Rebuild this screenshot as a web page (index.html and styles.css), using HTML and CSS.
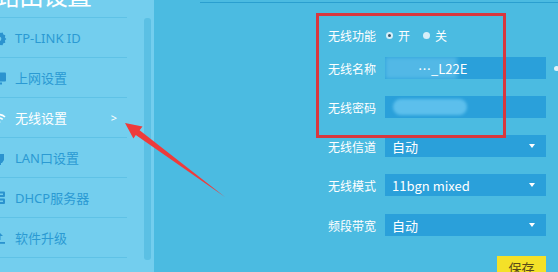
FILE: index.html
```html
<!DOCTYPE html>
<html lang="zh-CN">
<head>
<meta charset="utf-8">
<title>无线设置</title>
<link rel="stylesheet" href="styles.css">
</head>
<body>
<div class="page">
  <aside class="sidebar">
    <nav class="nav">
      <div class="brand">路由设置</div>
      <ul class="menu">
        <li class="item">
          <svg class="ico" viewBox="0 0 16 16"><path d="M8 1.5l1.6 1.4 2.1-.4.6 2 2 .8-.4 2.1L15.3 9l-1.4 1.6.4 2.1-2 .6-.8 2-2.1-.4L8 16.3 6.4 14.9l-2.1.4-.6-2-2-.8.4-2.1L.7 9l1.4-1.6L1.7 5.3l2-.6.8-2 2.1.4z" fill="#2b93cf"/><circle cx="8" cy="8.8" r="2.3" fill="#72cded"/></svg>
          <span class="txt">TP-LINK ID</span>
        </li>
        <li class="item">
          <svg class="ico" viewBox="0 0 16 16"><rect x="1" y="2.5" width="14" height="9" rx="1" fill="#2b93cf"/><rect x="5" y="12.5" width="6" height="2" fill="#2b93cf"/></svg>
          <span class="txt">上网设置</span>
        </li>
        <li class="item active">
          <svg class="ico" viewBox="0 0 16 16"><path d="M2 7a8.5 8.5 0 0 1 12 0M4.3 9.4a5.2 5.2 0 0 1 7.4 0" fill="none" stroke="#ffffff" stroke-width="1.6"/><circle cx="8" cy="12" r="1.3" fill="#ffffff"/></svg>
          <span class="txt">无线设置</span>
          <span class="chev">&gt;</span>
        </li>
        <li class="item">
          <svg class="ico" viewBox="0 0 16 16"><path d="M3 4h10v6l-2 3H5l-2-3z" fill="#2b93cf"/><rect x="6" y="13" width="4" height="2" fill="#2b93cf"/></svg>
          <span class="txt">LAN口设置</span>
        </li>
        <li class="item">
          <svg class="ico" viewBox="0 0 16 16"><rect x="2" y="1.5" width="12" height="5.5" rx="1" fill="#2b93cf"/><rect x="2" y="8.5" width="12" height="5.5" rx="1" fill="#2b93cf"/><rect x="9" y="3.5" width="3" height="1.5" fill="#72cded"/><rect x="9" y="10.5" width="3" height="1.5" fill="#72cded"/></svg>
          <span class="txt">DHCP服务器</span>
        </li>
        <li class="item">
          <svg class="ico" viewBox="0 0 16 16"><path d="M8 2l4 4H9.5v4h-3V6H4z" fill="#2b93cf"/><rect x="2" y="12" width="12" height="1.8" fill="#2b93cf"/></svg>
          <span class="txt">软件升级</span>
        </li>
        <li class="item">
          <svg class="ico" viewBox="0 0 16 16"><circle cx="8" cy="8" r="6" fill="#2b93cf"/></svg>
          <span class="txt">设备管理</span>
        </li>
      </ul>
    </nav>
    <div class="track"><div class="thumb"></div></div>
  </aside>

  <main class="main">
    <div class="topline"></div>
    <form class="form">
      <div class="row row-radio">
        <span class="label">无线功能</span>
        <div class="radios">
          <span class="radio checked"></span><span class="rtxt">开</span>
          <span class="radio"></span><span class="rtxt">关</span>
        </div>
      </div>
      <div class="row row-name">
        <span class="label">无线名称</span>
        <div class="field">
          <span class="mask mask-name"></span>
          <span class="ftxt ssid">…_L22E</span>
        </div>
        <span class="eye"></span>
      </div>
      <div class="row">
        <span class="label">无线密码</span>
        <div class="field">
          <span class="mask mask-pwd"></span>
        </div>
      </div>
      <div class="row">
        <span class="label">无线信道</span>
        <div class="field select"><span class="ftxt">自动</span><span class="caret"></span></div>
      </div>
      <div class="row">
        <span class="label">无线模式</span>
        <div class="field select"><span class="ftxt">11bgn mixed</span><span class="caret"></span></div>
      </div>
      <div class="row row-band">
        <span class="label">频段带宽</span>
        <div class="field select"><span class="ftxt">自动</span><span class="caret"></span></div>
      </div>
      <div class="actions">
        <button type="button" class="save">保存</button>
      </div>
    </form>
  </main>

  <svg class="annot" viewBox="0 0 558 272" width="558" height="272">
    <rect x="317.5" y="14.5" width="187" height="122" fill="none" stroke="#d8373e" stroke-width="3"/>
    <polygon points="125,123 142.5,126.5 139.6,130.3 225,197 135.8,135 133.4,138.6" fill="#ee3b3b"/>
  </svg>
</div>
</body>
</html>
```

FILE: styles.css
```css
* { box-sizing: border-box; }

html, body {
  margin: 0;
  padding: 0;
}

body {
  width: 558px;
  height: 272px;
  overflow: hidden;
  font-family: "Noto Sans", "Noto Sans CJK SC", sans-serif;
  background: #4bbbe1;
}

.page {
  position: relative;
  display: flex;
  width: 558px;
  height: 272px;
  overflow: hidden;
}

.sidebar {
  display: flex;
  width: 154px;
  flex: none;
  background: #73ceee;
}

.nav {
  width: 144px;
  overflow: hidden;
}

.brand {
  margin: -18px 0 0 -5px;
  height: 35px;
  font-family: "Noto Sans CJK SC", sans-serif;
  font-size: 25px;
  line-height: 25px;
  color: #ffffff;
  white-space: nowrap;
  letter-spacing: -1px;
}

.menu {
  list-style: none;
  margin: 0;
  padding: 0;
  width: 127px;
  border-top: 1px solid #5fc2e6;
}

.item {
  display: flex;
  align-items: center;
  height: 40px;
  border-bottom: 1px solid #5fc2e6;
  color: #2b9ad3;
  font-size: 13px;
}

.ico {
  width: 16px;
  height: 16px;
  margin-left: -9px;
  margin-right: 8px;
  flex: none;
}

.txt {
  font-family: "Noto Sans", "Noto Sans CJK SC", sans-serif;
  white-space: nowrap;
}

.item.active { color: #ffffff; }

.chev {
  margin-left: auto;
  margin-right: 10px;
  font-size: 11px;
  color: #ffffff;
}

.track {
  width: 10px;
  padding: 18px 3px 12px 0;
}

.thumb {
  width: 7px;
  height: 100%;
  border-radius: 3px;
  background: #5bc0e4;
}

.main {
  flex: 1;
  padding-top: 2px;
}

.topline {
  margin-left: 46px;
  height: 1px;
  background: #2a9fcf;
}

.form {
  display: flex;
  flex-direction: column;
  gap: 17px;
  margin: 21px 0 0 174px;
}

.row {
  position: relative;
  display: grid;
  grid-template-columns: 57px 161px;
  align-items: center;
  height: 22px;
}

.row-radio { margin-bottom: -6px; }
.row-band { margin-top: 1px; }

.label {
  font-family: "Noto Sans CJK SC", sans-serif;
  font-size: 12px;
  color: #ffffff;
  white-space: nowrap;
}

.radios {
  display: flex;
  align-items: center;
  color: #ffffff;
  font-family: "Noto Sans CJK SC", sans-serif;
  font-size: 12px;
}

.radio {
  width: 7px;
  height: 7px;
  border-radius: 50%;
  background: #d6eef8;
  margin: 0 5px 0 1px;
  position: relative;
}

.radio.checked::after {
  content: "";
  position: absolute;
  left: 2px;
  top: 2px;
  width: 3px;
  height: 3px;
  border-radius: 50%;
  background: #3a5a70;
}

.rtxt { margin-right: 12px; }

.field {
  position: relative;
  display: flex;
  align-items: center;
  height: 22px;
  background: #2aa0da;
  padding-left: 7px;
  overflow: hidden;
}

.ftxt {
  position: relative;
  font-family: "Noto Sans CJK SC", sans-serif;
  font-size: 13px;
  color: #ffffff;
  white-space: nowrap;
}

.ssid { margin-left: 26px; }

.mask {
  position: absolute;
  background: #52b8e6;
}

.mask-name {
  left: 0;
  top: 0;
  width: 72px;
  height: 22px;
  filter: blur(2px);
}

.mask-pwd {
  left: 8px;
  top: 3px;
  width: 74px;
  height: 16px;
  border-radius: 8px;
  background: #5cbfec;
  filter: blur(1.5px);
}

.eye {
  position: absolute;
  left: 226px;
  top: 9px;
  width: 5px;
  height: 5px;
  border-radius: 50%;
  background: #e4f2f8;
}

.caret {
  margin-left: auto;
  margin-right: 11px;
  width: 0;
  height: 0;
  border-left: 3px solid transparent;
  border-right: 3px solid transparent;
  border-top: 4px solid #ffffff;
}

.actions {
  display: flex;
  justify-content: flex-end;
  width: 218px;
  margin-top: 3px;
}

.save {
  width: 49px;
  height: 24px;
  border: 0;
  padding: 0;
  background: #f4e128;
  color: #5a4a18;
  font-family: "Noto Sans CJK SC", sans-serif;
  font-size: 13px;
  line-height: 24px;
}

.annot {
  position: absolute;
  left: 0;
  top: 0;
  pointer-events: none;
}
```
